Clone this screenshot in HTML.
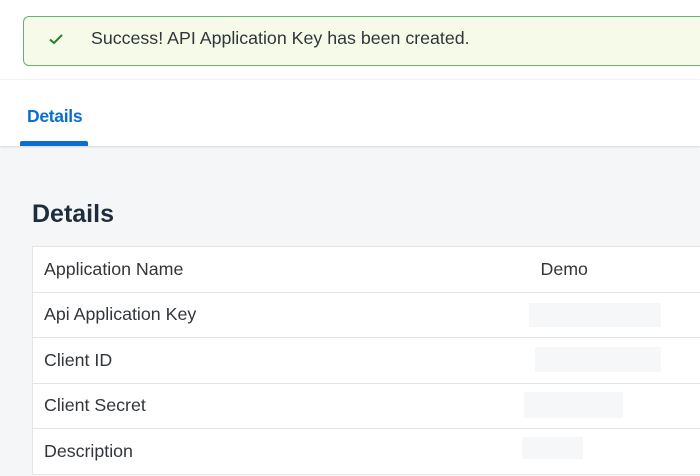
<!DOCTYPE html>
<html><head><style>
*{margin:0;padding:0;box-sizing:border-box}
body{width:700px;height:476px;overflow:hidden;background:#f5f6f7;font-family:"Liberation Sans",Arial,sans-serif;position:relative}
.top{position:absolute;left:0;top:0;width:700px;height:79px;background:#fff}
.tabs{position:absolute;left:0;top:79px;width:700px;height:67px;background:#fff;border-top:1px solid #f4f4f4;box-shadow:0 1px 2px rgba(0,0,0,0.12)}
.banner{position:absolute;left:23px;top:16px;width:700px;height:50px;background:#f5fae9;border:1px solid #6ab06e;border-radius:6px}
.banner .t{position:absolute;left:67px;top:11px;font-size:17.8px;color:#32363a}
.chk{position:absolute;left:24px;top:15px}
.tab{position:absolute;left:27px;top:26px;font-size:17.5px;color:#0a6ed1;font-weight:bold;letter-spacing:-0.3px}
.ul{position:absolute;left:20px;top:61px;width:68px;height:5px;background:#0a6ed1;border-radius:2px 2px 0 0}
h2{position:absolute;left:32px;top:200px;font-size:25px;font-weight:bold;color:#1d2d3e}
table{position:absolute;left:32px;top:246px;width:680px;border-collapse:collapse;background:#fff}
td{height:45.5px;border-top:1px solid #e5e5e5;border-bottom:1px solid #e5e5e5;font-size:17.8px;color:#32363a;padding-left:11px;position:relative}
td:first-child{border-left:1px solid #e5e5e5;width:497px}
.ph{position:absolute;background:#f6f7f8}
</style></head><body>
<div class="top"><div class="banner"><svg class="chk" width="16" height="14" viewBox="0 0 16 14"><path d="M2 7.5 L6 11 L14 3" stroke="#2b7d2b" stroke-width="2" fill="none"/></svg><div class="t">Success! API Application Key has been created.</div></div></div>
<div class="tabs"><div class="tab">Details</div><div class="ul"></div></div>
<h2>Details</h2>
<table>
<tr><td>Application Name</td><td>Demo</td></tr>
<tr><td>Api Application Key</td><td></td></tr>
<tr><td>Client ID</td><td></td></tr>
<tr><td>Client Secret</td><td></td></tr>
<tr><td>Description</td><td></td></tr>
</table>
<div class="ph" style="left:529px;top:303px;width:132px;height:24px"></div>
<div class="ph" style="left:535px;top:347px;width:126px;height:25px"></div>
<div class="ph" style="left:524px;top:392px;width:99px;height:26px"></div>
<div class="ph" style="left:522px;top:437px;width:61px;height:22px"></div>
</body></html>
